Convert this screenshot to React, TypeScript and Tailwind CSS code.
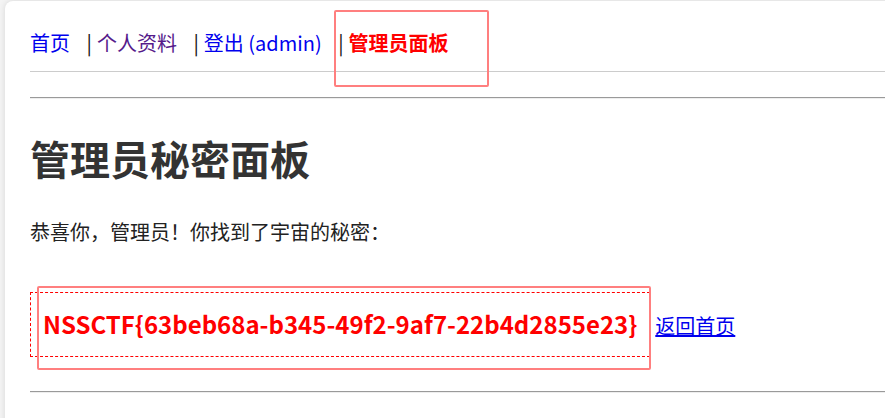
import React from "react";

const FLAG = "NSSCTF{63beb68a-b345-49f2-9af7-22b4d2855e23}";

const NAV = [
  { label: "首页", className: "text-[#0000ee]" },
  { label: "个人资料", className: "text-[#551a8b]" },
  { label: "登出 (admin)", className: "text-[#0000ee]" },
  { label: "管理员面板", className: "text-[#ff0000] font-bold" },
];

export default function App() {
  return (
    <div
      className="relative w-[885px] h-[418px] overflow-hidden bg-[#f4f4f4] pl-[5px] pt-[1px]"
      style={{ fontFamily: '"Noto Sans CJK SC", "Noto Sans", sans-serif' }}
    >
      <div className="w-[920px] h-[440px] bg-white rounded-tl-lg shadow-[0_0_6px_rgba(0,0,0,0.12)] pl-[25px]">
        {/* nav */}
        <nav className="flex items-center pt-[27px] pb-[13px] border-b border-[#cccccc] text-[20px] leading-[30px]">
          {NAV.map((item, idx) => (
            <React.Fragment key={item.label}>
              {idx > 0 && <span className="text-[#111] mr-[5px]">|</span>}
              <a href="#" className={`${item.className} ${idx < NAV.length - 1 ? "mr-[16.5px]" : ""}`}>
                {item.label}
              </a>
            </React.Fragment>
          ))}
        </nav>

        <div className="mt-[25px] h-[2px] border-t border-[#9a9a9a] border-b border-b-[#eeeeee]" />

        <h1 className="mt-[35px] text-[40px] leading-[48px] font-bold text-[#333333]">管理员秘密面板</h1>

        <p className="mt-[35px] text-[20px] leading-[30px] text-[#222222]">恭喜你，管理员！你找到了宇宙的秘密：</p>

        <div className="mt-[45px] flex items-baseline">
          <span className="border border-dashed border-[#ff0000] px-[12px] pt-[13px] pb-[14px] text-[24px] leading-[36px] font-bold text-[#ff0000]">
            {FLAG}
          </span>
          <a href="#" className="ml-[5px] text-[20px] leading-[30px] text-[#0000ee] underline">
            返回首页
          </a>
        </div>

        <div className="mt-[34px] h-[2px] border-t border-[#9a9a9a] border-b border-b-[#eeeeee]" />
      </div>

      {/* annotation boxes */}
      <div className="absolute left-[334px] top-[10px] w-[155px] h-[77px] border-2 border-[#ff7f7f] rounded-[2px]" />
      <div className="absolute left-[37px] top-[286px] w-[614px] h-[84px] border-2 border-[#ff7f7f] rounded-[2px]" />
    </div>
  );
}
